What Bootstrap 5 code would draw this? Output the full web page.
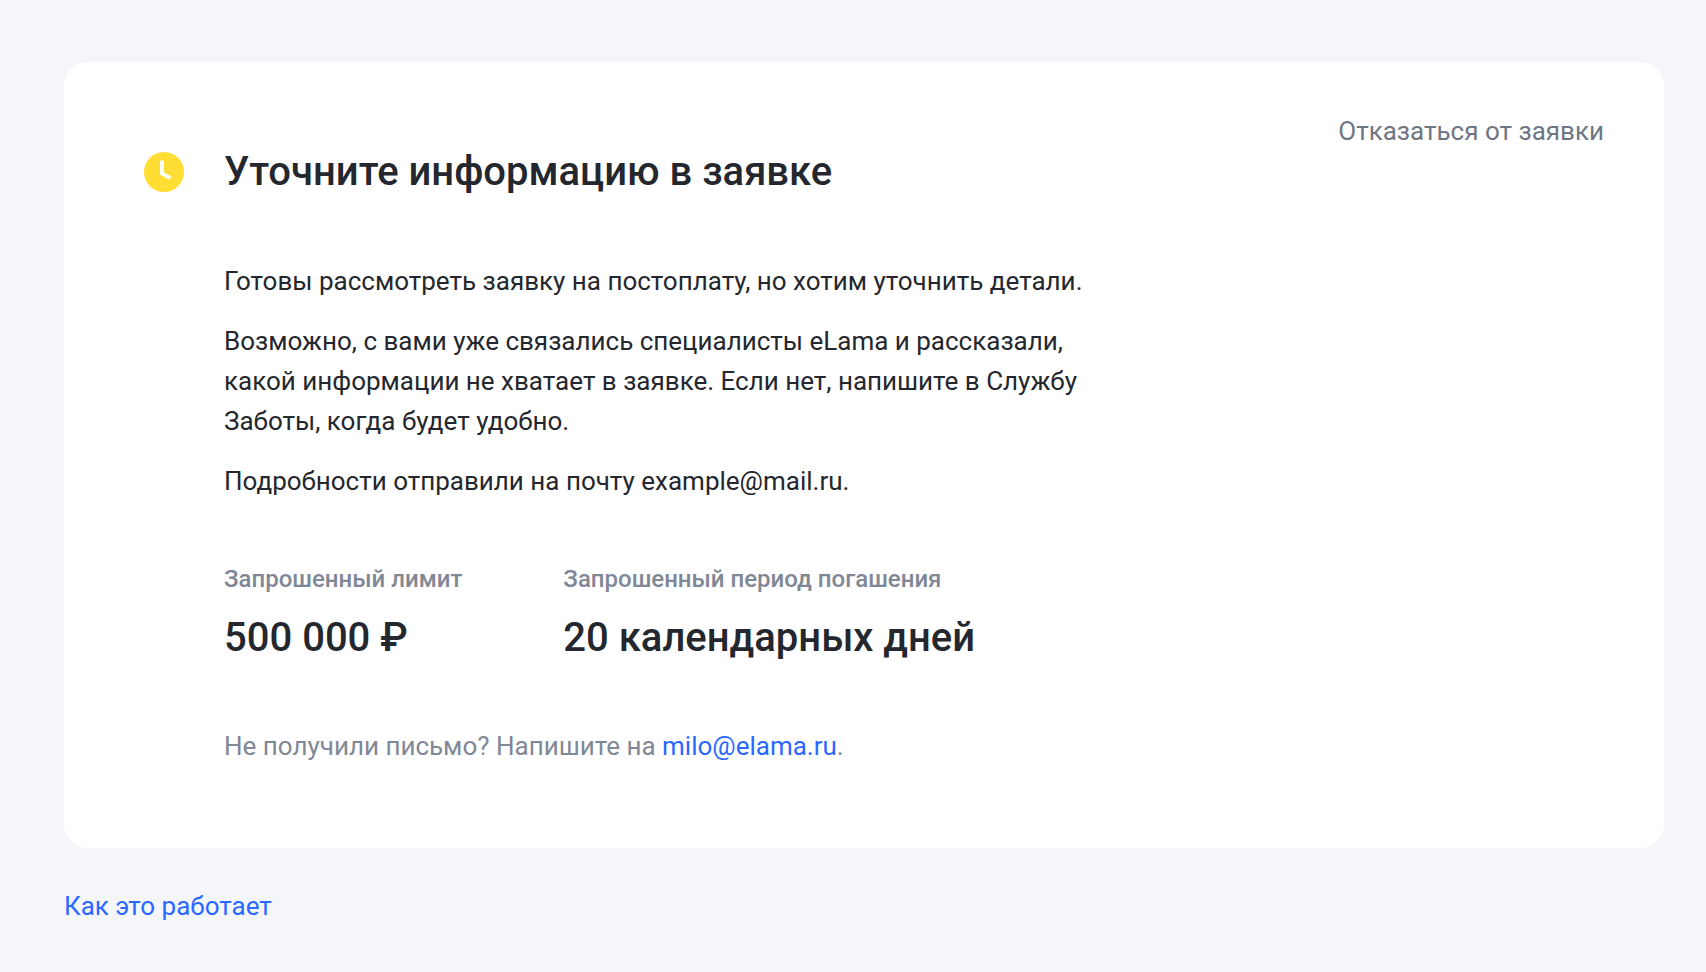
<!DOCTYPE html>
<html lang="ru">
<head>
<meta charset="utf-8">
<meta name="viewport" content="width=device-width, initial-scale=1">
<title>Заявка на постоплату</title>
<link href="https://cdn.jsdelivr.net/npm/bootstrap@5.3.0/dist/css/bootstrap.min.css" rel="stylesheet">
<style>
  body { background: #f4f6fa; color: #24272d; font-family: Roboto, sans-serif; font-size: 26px; line-height: 40px; }
  .page { padding: 62px 42px 40px 64px; }
  .request { border: 0; border-radius: 24px; padding: 49px 60px 82px 80px; }
  .request-head { gap: 40px; padding-top: 35px; }
  .request-title { font-size: 40px; line-height: 52px; font-weight: 500; }
  .request-body { padding-left: 80px; }
  .request-text { max-width: 880px; padding-top: 63px; }
  .request-text p { margin-bottom: 20px; }
  .facts { gap: 101px; padding-top: 38px; }
  .fact-name { font-size: 24px; line-height: 40px; font-weight: 500; color: #808796; }
  .fact-value { font-size: 40px; line-height: 52px; font-weight: 500; margin: 13px 0 0; }
  .hint { color: #808796; padding-top: 62px; }
  .decline { color: #6f7683; line-height: 40px; font-size: 26px; }
  .brand-link { color: #2a69ff; text-decoration: none; }
  .how { margin-top: 38px; }
</style>
</head>
<body>
<main class="page">
  <section class="card request">
    <div class="d-flex justify-content-between align-items-start">
      <div class="request-head d-flex align-items-center">
        <svg class="flex-shrink-0" width="40" height="40" viewBox="0 0 40 40" aria-hidden="true"><circle cx="20" cy="20" r="20" fill="#ffdd33"/><path d="M18 8.500V21.500L26.500 26" fill="none" stroke="#fff" stroke-width="4"/></svg>
        <h1 class="request-title m-0">Уточните информацию в заявке</h1>
      </div>
      <button type="button" class="decline btn border-0 p-0">Отказаться от заявки</button>
    </div>
    <div class="request-body">
      <div class="request-text">
        <p>Готовы рассмотреть заявку на постоплату, но хотим уточнить детали.</p>
        <p>Возможно, с вами уже связались специалисты eLama и рассказали, какой информации не хватает в заявке. Если нет, напишите в Службу Заботы, когда будет удобно.</p>
        <p>Подробности отправили на почту example@mail.ru.</p>
      </div>
      <dl class="facts d-flex flex-wrap m-0">
        <div><dt class="fact-name">Запрошенный лимит</dt><dd class="fact-value">500 000 ₽</dd></div>
        <div><dt class="fact-name">Запрошенный период погашения</dt><dd class="fact-value">20 календарных дней</dd></div>
      </dl>
      <p class="hint m-0">Не получили письмо? Напишите на <a class="brand-link" href="mailto:milo@elama.ru">milo@elama.ru</a>.</p>
    </div>
  </section>
  <div class="how"><a class="brand-link" href="#">Как это работает</a></div>
</main>
<script src="https://cdn.jsdelivr.net/npm/bootstrap@5.3.0/dist/js/bootstrap.bundle.min.js"></script>
</body>
</html>
